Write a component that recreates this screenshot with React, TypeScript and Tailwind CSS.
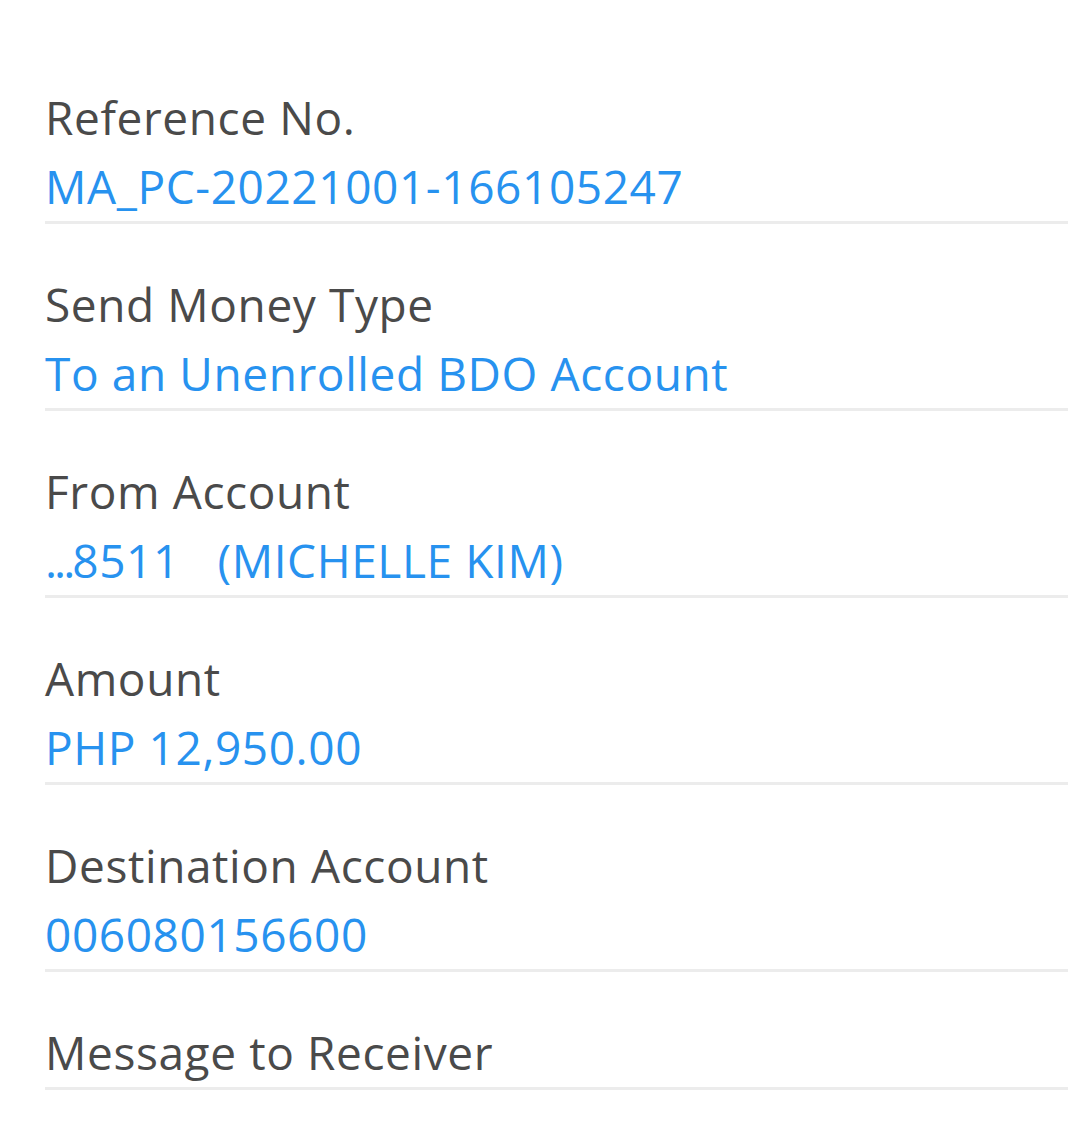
const rows = [
  { label: 'Reference No.', value: 'MA_PC-20221001-166105247' },
  { label: 'Send Money Type', value: 'To an Unenrolled BDO Account' },
  { label: 'From Account', value: '8511\u00a0\u00a0\u00a0(MICHELLE KIM)', masked: true },
  { label: 'Amount', value: 'PHP 12,950.00' },
  { label: 'Destination Account', value: '006080156600' },
  { label: 'Message to Receiver', value: '' },
];

function DetailRow({ label, value, masked }: { label: string; value: string; masked?: boolean }) {
  return (
    <div className="border-b-[3px] border-[#ececec] pt-[53px] pb-[8px] first:pt-[90px]">
      <div className="text-[46px] leading-[54px] tracking-[0.6px] text-[#4a4a4a]">{label}</div>
      {value ? (
        <div className="mt-[15px] text-[46px] leading-[54px] tracking-[0.6px] text-[#2792ef]">
          {masked ? <span className="tracking-[-3px]">...</span> : null}
          {value}
        </div>
      ) : null}
    </div>
  );
}

export default function App() {
  return (
    <div
      className="min-h-[1131px] bg-white pr-[12px] pl-[45px]"
      style={{ fontFamily: '"Open Sans", "Liberation Sans", sans-serif' }}
    >
      {rows.map((r) => (
        <DetailRow key={r.label} label={r.label} value={r.value} masked={r.masked} />
      ))}
    </div>
  );
}
